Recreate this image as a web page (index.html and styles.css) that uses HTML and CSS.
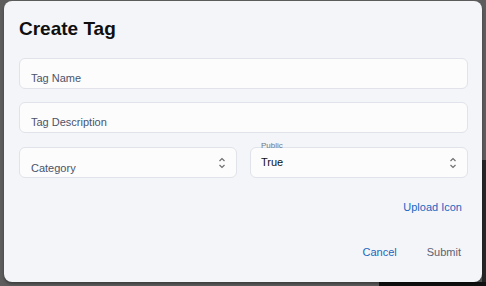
FILE: index.html
```html
<!DOCTYPE html>
<html lang="en">
<head>
  <meta charset="UTF-8" />
  <meta name="viewport" content="width=device-width, initial-scale=1.0" />
  <title>Create Tag</title>
  <link rel="stylesheet" href="styles.css">
</head>
<body>
  <div class="dialog">
    <h2 class="titulo">Create Tag</h2>

    <div class="campo">Tag Name</div>
    <div class="campo campo-desc">Tag Description</div>

    <div class="fila">
      <div class="campo campo-select">
        <span>Category</span>
        <svg class="flechas" width="8" height="12" viewBox="0 0 8 12">
          <path d="M1.5 4 L4 1.5 L6.5 4 M1.5 8 L4 10.5 L6.5 8" fill="none" stroke="#6f6f6f" stroke-width="1.2" />
        </svg>
      </div>
      <div class="campo campo-select campo-valor">
        <label class="etiqueta">Public</label>
        <span>True</span>
        <svg class="flechas" width="8" height="12" viewBox="0 0 8 12">
          <path d="M1.5 4 L4 1.5 L6.5 4 M1.5 8 L4 10.5 L6.5 8" fill="none" stroke="#6f6f6f" stroke-width="1.2" />
        </svg>
      </div>
    </div>

    <div class="subir">
      <button class="boton boton-azul">Upload Icon</button>
    </div>

    <div class="acciones">
      <button class="boton boton-azul">Cancel</button>
      <button class="boton boton-gris">Submit</button>
    </div>
  </div>
</body>
</html>
```

FILE: styles.css
```css
body {
  font-family: "Liberation Sans", Arial, sans-serif;
  margin: 0;
  padding: 1px 0 0 4px;
  width: 486px;
  height: 286px;
  box-sizing: border-box;
  overflow: hidden;
  background:
    linear-gradient(to right, #5d5d5d 379px, #111 379px) bottom / 100% 4px no-repeat,
    linear-gradient(#5d5d5d 160px, #262626 160px) right / 4px 100% no-repeat,
    #5d5d5d;
}

.dialog {
  width: 478px;
  height: 281px;
  box-sizing: border-box;
  background: #f4f5f9;
  border-radius: 8px;
  box-shadow: 0 2px 3px rgba(0,0,0,0.35);
  padding: 16px 14px 0 15px;
}

.titulo {
  margin: 0 0 17px;
  font-size: 19px;
  line-height: 24px;
  font-weight: bold;
  color: #0f0f0f;
}

.campo {
  position: relative;
  height: 31px;
  box-sizing: border-box;
  background: #fcfcfd;
  border: 1px solid #e1e3ea;
  border-radius: 6px;
  padding: 13px 11px 0;
  font-size: 11px;
  line-height: 13px;
  color: #4b5369;
}

.campo-desc {
  margin-top: 13px;
}

.fila {
  display: grid;
  grid-template-columns: 1fr 1fr;
  gap: 13px;
  margin-top: 14px;
}

.campo-select {
  padding-top: 14px;
}

.campo-valor {
  padding: 8px 10px 0;
  color: #111;
}

.flechas {
  position: absolute;
  right: 10px;
  top: 9px;
}

.etiqueta {
  position: absolute;
  left: 10px;
  top: -7px;
  font-size: 8px;
  line-height: 9px;
  color: #6f7688;
}

.subir {
  display: flex;
  justify-content: flex-end;
  margin-top: 17px;
}

.acciones {
  display: flex;
  justify-content: flex-end;
  gap: 16px;
  margin-top: 20px;
}

.boton {
  font-family: inherit;
  font-size: 11px;
  line-height: 13px;
  padding: 6px 6px;
  background: none;
  border: none;
  cursor: pointer;
}

.acciones .boton {
  padding: 6px 7px;
}

.boton-azul {
  color: #1866c0;
}

.boton-gris {
  color: #5b6275;
}
```
